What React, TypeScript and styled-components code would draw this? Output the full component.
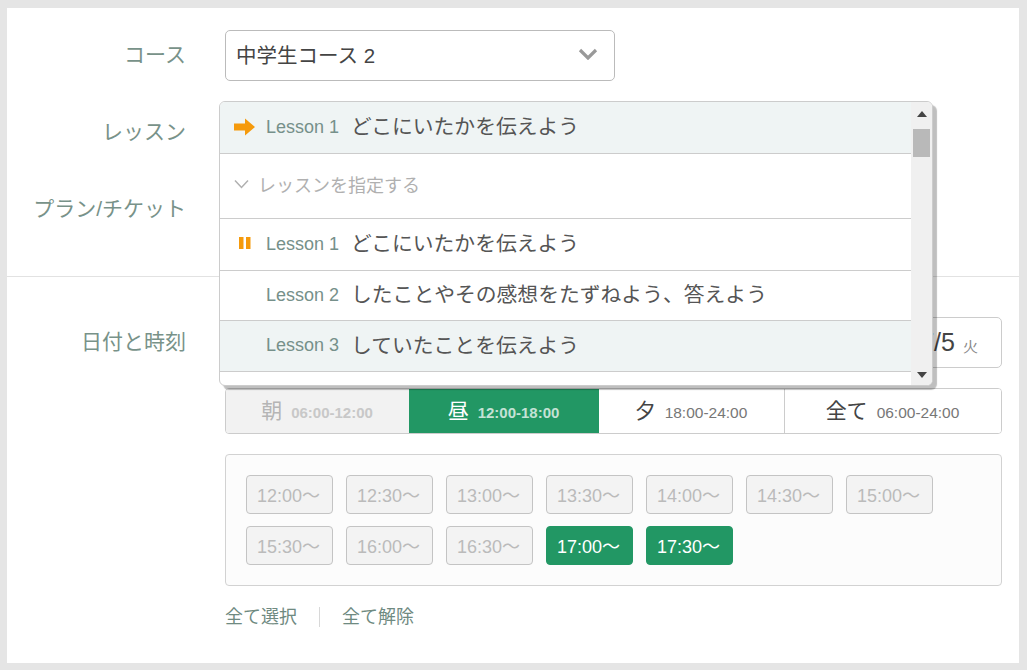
import React from "react";
import styled, { createGlobalStyle } from "styled-components";

const Global = createGlobalStyle`
  html, body { margin: 0; padding: 0; background: #e5e5e5; }
  body { font-family: "Liberation Sans", "Noto Sans CJK JP", sans-serif; color: #444; }
  * { box-sizing: border-box; }
`;

const Page = styled.div`
  width: 1027px;
  height: 670px;
  padding: 8px 8px 7px 7px;
  overflow: hidden;
`;

const Card = styled.div`
  position: relative;
  height: 655px;
  background: #fff;
  padding-top: 22px;
`;

const Row = styled.div`
  display: grid;
  grid-template-columns: 179px 1fr;
  column-gap: 39px;
  align-items: center;
  margin-bottom: 26px;
  height: 51px;
  padding-right: 17px;
`;

const Label = styled.div`
  font-size: 21px;
  line-height: 28px;
  color: #789289;
  text-align: right;
  white-space: nowrap;
  padding-bottom: 1px;
`;

const SelectBox = styled.div`
  width: 390px;
  height: 51px;
  border: 1px solid #bbb;
  border-radius: 5px;
  display: flex;
  align-items: center;
  justify-content: space-between;
  padding: 0 16px 3px 10px;
  font-size: 20.5px;
  color: #444;
`;

const Divider = styled.hr`
  border: 0;
  border-top: 1px solid #e2e2e2;
  margin: 41px 0 40px;
`;

const DateBox = styled.div`
  height: 51px;
  border: 1px solid #ccc;
  border-radius: 5px;
  display: flex;
  align-items: center;
  justify-content: flex-end;
  padding-right: 23px;
  font-size: 25px;
  color: #444;
  gap: 8px;
`;

const Weekday = styled.span`
  font-size: 15px;
  color: #888;
  margin-top: 5px;
`;

const Under = styled.div`
  margin: -6px 17px 0 218px;
`;

const Segments = styled.div`
  display: grid;
  grid-template-columns: 183px 190px 185px 1fr;
  height: 46px;
  border: 1px solid #ccc;
  border-radius: 4px;
  overflow: hidden;
`;

const Segment = styled.div<{ $state: "off" | "on" | "normal"; $sep?: boolean }>`
  display: flex;
  align-items: baseline;
  justify-content: center;
  gap: 9px;
  font-size: 21px;
  line-height: 26px;
  padding: 9px 1px 0 0;
  background: ${(p) => (p.$state === "off" ? "#f2f2f2" : p.$state === "on" ? "#229764" : "#fff")};
  color: ${(p) => (p.$state === "off" ? "#b5b5b5" : p.$state === "on" ? "#fff" : "#444")};
  border-left: ${(p) => (p.$sep ? "1px solid #ccc" : "0")};
`;

const SegmentTime = styled.span<{ $state: "off" | "on" | "normal" }>`
  font-size: ${(p) => (p.$state === "normal" ? 15.5 : 15)}px;
  line-height: 18px;
  font-weight: ${(p) => (p.$state === "normal" ? 400 : 700)};
  color: ${(p) => (p.$state === "off" ? "#c8c8c8" : p.$state === "on" ? "#c4e2d5" : "#777")};
`;

const Panel = styled.div`
  margin-top: 20px;
  height: 132px;
  border: 1px solid #d2d2d2;
  border-radius: 4px;
  background: #fcfcfc;
  padding: 20px;
  display: grid;
  grid-template-columns: repeat(7, 87px);
  grid-auto-rows: 39px;
  column-gap: 13px;
  row-gap: 12px;
`;

const TimeButton = styled.div<{ $on?: boolean }>`
  display: flex;
  align-items: center;
  justify-content: center;
  border-radius: 4px;
  font-size: 18px;
  padding: 0 2px 2px 0;
  border: 1px solid ${(p) => (p.$on ? "#229764" : "#c4c4c4")};
  background: ${(p) => (p.$on ? "#229764" : "#f3f3f3")};
  color: ${(p) => (p.$on ? "#fff" : "#bbb")};
`;

const Links = styled.div`
  margin-top: 19px;
  display: flex;
  align-items: center;
  font-size: 18px;
  line-height: 24px;
  color: #6f8a81;
`;

const LinkSep = styled.span`
  width: 1px;
  height: 20px;
  background: #d8d8d8;
  margin: 0 22px;
`;

const Dropdown = styled.div`
  position: absolute;
  left: 212px;
  top: 93px;
  width: 714px;
  height: 285px;
  background: #fff;
  border: 1px solid #ccc;
  border-radius: 6px;
  box-shadow: 4px 4px 1px rgba(0, 0, 0, 0.25);
  display: flex;
  overflow: hidden;
`;

const List = styled.div`
  flex: 1;
  min-width: 0;
  overflow: hidden;
`;

const Item = styled.div<{ $tint?: boolean; $h?: number }>`
  height: ${(p) => p.$h ?? 51}px;
  border-bottom: 1px solid #ccc;
  background: ${(p) => (p.$tint ? "#eff4f4" : "#fff")};
  display: flex;
  align-items: center;
  padding-bottom: 5px;
`;

const IconSlot = styled.span`
  width: 46px;
  padding-left: 14px;
  display: flex;
  align-items: center;
  flex: none;
`;

const LessonNo = styled.span`
  font-size: 18px;
  color: #76908a;
  margin-top: 4px;
  width: 85px;
  flex: none;
`;

const LessonTitle = styled.span`
  font-size: 20.8px;
  color: #555;
  white-space: nowrap;
`;

const GroupHead = styled.div`
  height: 65px;
  border-bottom: 1px solid #ccc;
  display: flex;
  align-items: center;
  gap: 9px;
  padding: 0 0 4px 14px;
  font-size: 18px;
  color: #b0b0b0;
`;

const Scrollbar = styled.div`
  width: 21px;
  flex: none;
  background: #f0f0f0;
  display: flex;
  flex-direction: column;
  align-items: center;
  position: relative;
  padding: 9px 0 7px;
`;

const Thumb = styled.div`
  width: 17px;
  height: 28px;
  background: #b9b9b9;
  margin-top: 12px;
`;

const Spacer = styled.div`
  flex: 1;
`;

const Tri = styled.svg`
  display: block;
`;

const ArrowSvg = styled.svg`
  margin-top: 3px;
`;

const PauseSvg = styled.svg`
  margin-top: 2px;
`;

const Arrow = () => (
  <ArrowSvg width="22" height="18" viewBox="0 0 22 18">
    <path d="M0 5.5H11V0.5L21 9L11 17.5V12.5H0Z" fill="#f59a0c" />
  </ArrowSvg>
);
const Pause = () => (
  <PauseSvg width="22" height="12" viewBox="0 0 22 12">
    <path d="M5 0H9.5V12H5ZM12 0H16.5V12H12Z" fill="#f59a0c" />
  </PauseSvg>
);
const ThinChevron = () => (
  <svg width="15" height="10" viewBox="0 0 15 10">
    <path d="M1 1.5L7.5 8.5L14 1.5" fill="none" stroke="#b0b0b0" strokeWidth="1.5" />
  </svg>
);
const BoldChevron = () => (
  <svg width="20" height="12" viewBox="0 0 20 12">
    <path d="M2 2L10 10L18 2" fill="none" stroke="#999" strokeWidth="3.2" />
  </svg>
);

const earlier = ["12:00〜", "12:30〜", "13:00〜", "13:30〜", "14:00〜", "14:30〜", "15:00〜", "15:30〜", "16:00〜", "16:30〜"];
const later = ["17:00〜", "17:30〜"];

const segs = [
  { name: "朝", time: "06:00-12:00", state: "off" as const },
  { name: "昼", time: "12:00-18:00", state: "on" as const },
  { name: "夕", time: "18:00-24:00", state: "normal" as const },
  { name: "全て", time: "06:00-24:00", state: "normal" as const },
];

export default function App() {
  return (
    <Page>
      <Global />
      <Card>
        <Row>
          <Label>コース</Label>
          <SelectBox>
            <span>中学生コース 2</span>
            <BoldChevron />
          </SelectBox>
        </Row>
        <Row>
          <Label>レッスン</Label>
          <div />
        </Row>
        <Row>
          <Label>プラン/チケット</Label>
          <div />
        </Row>
        <Divider />
        <Row>
          <Label>日付と時刻</Label>
          <DateBox>
            <span>2023/7/5</span>
            <Weekday>火</Weekday>
          </DateBox>
        </Row>
        <Under>
          <Segments>
            {segs.map((s, i) => (
              <Segment key={s.name} $state={s.state} $sep={i === 3}>
                <span>{s.name}</span>
                <SegmentTime $state={s.state}>{s.time}</SegmentTime>
              </Segment>
            ))}
          </Segments>
          <Panel>
            {earlier.map((t) => (
              <TimeButton key={t}>{t}</TimeButton>
            ))}
            {later.map((t) => (
              <TimeButton key={t} $on>
                {t}
              </TimeButton>
            ))}
          </Panel>
          <Links>
            <span>全て選択</span>
            <LinkSep />
            <span>全て解除</span>
          </Links>
        </Under>
        <Dropdown>
          <List>
            <Item $tint $h={52}>
              <IconSlot>
                <Arrow />
              </IconSlot>
              <LessonNo>Lesson 1</LessonNo>
              <LessonTitle>どこにいたかを伝えよう</LessonTitle>
            </Item>
            <GroupHead>
              <ThinChevron />
              <span>レッスンを指定する</span>
            </GroupHead>
            <Item $h={52}>
              <IconSlot>
                <Pause />
              </IconSlot>
              <LessonNo>Lesson 1</LessonNo>
              <LessonTitle>どこにいたかを伝えよう</LessonTitle>
            </Item>
            <Item $h={50}>
              <IconSlot />
              <LessonNo>Lesson 2</LessonNo>
              <LessonTitle>したことやその感想をたずねよう、答えよう</LessonTitle>
            </Item>
            <Item $tint>
              <IconSlot />
              <LessonNo>Lesson 3</LessonNo>
              <LessonTitle>していたことを伝えよう</LessonTitle>
            </Item>
          </List>
          <Scrollbar>
            <Tri width="10" height="6" viewBox="0 0 10 6">
              <path d="M5 0L10 6H0Z" fill="#444" />
            </Tri>
            <Thumb />
            <Spacer />
            <Tri width="10" height="6" viewBox="0 0 10 6">
              <path d="M0 0H10L5 6Z" fill="#444" />
            </Tri>
          </Scrollbar>
        </Dropdown>
      </Card>
    </Page>
  );
}
